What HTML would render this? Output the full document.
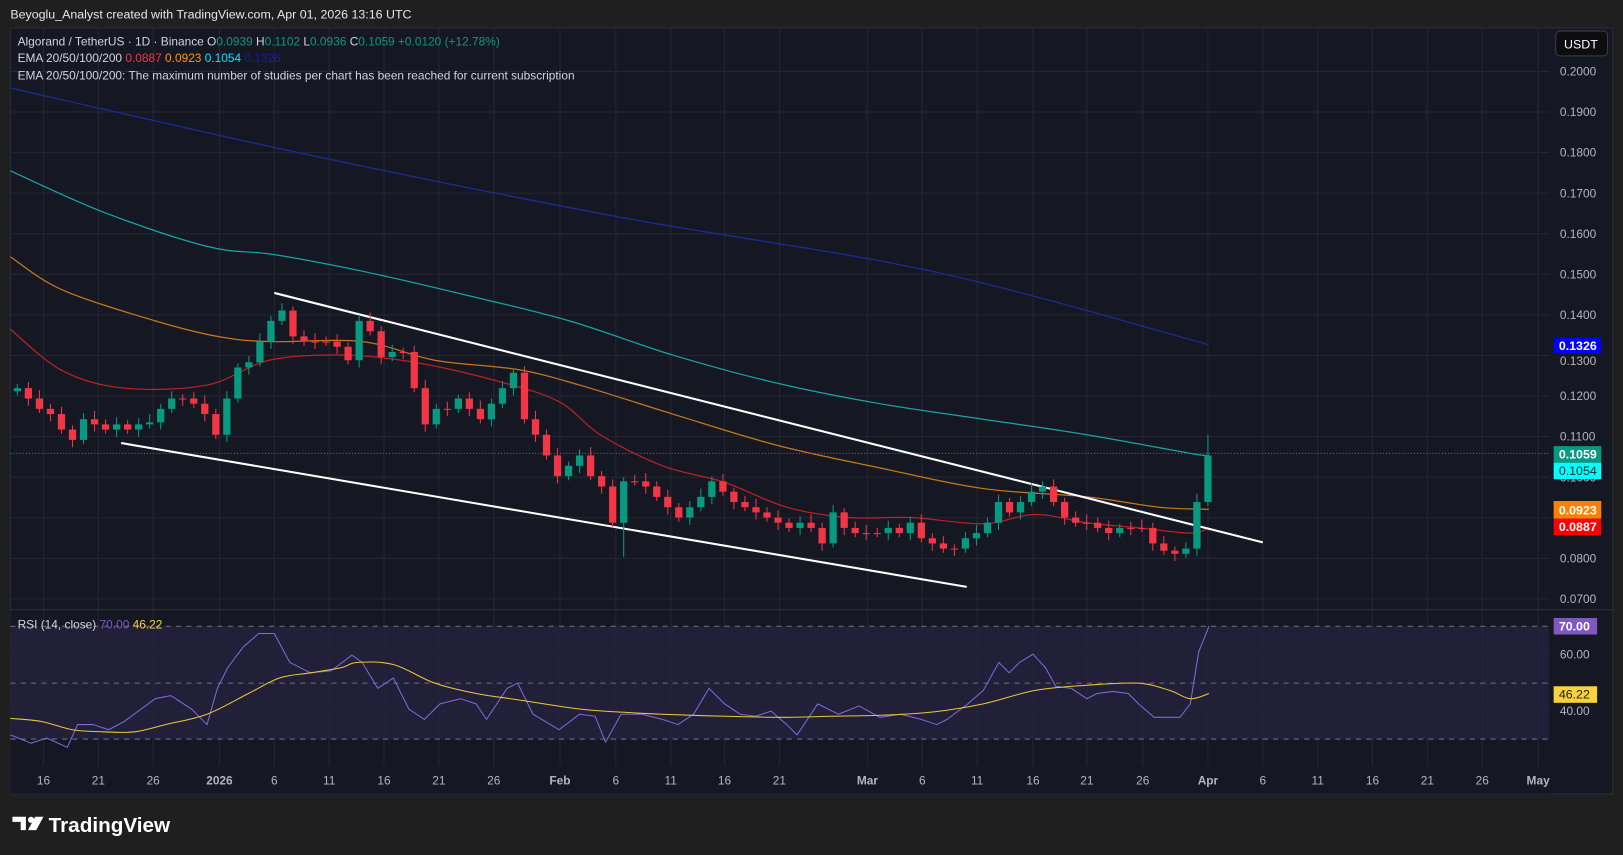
<!DOCTYPE html>
<html><head><meta charset="utf-8"><style>
html,body{margin:0;padding:0;background:#1f1f1f;width:1623px;height:855px;overflow:hidden}
svg{display:block}
text{font-family:"Liberation Sans",sans-serif}
</style></head><body>
<svg id="s" width="1623" height="855" viewBox="0 0 1568 826" xmlns="http://www.w3.org/2000/svg">
<rect width="1568" height="826" fill="#1f1f1f"/>
<text x="10" y="18" fill="#e6e6e6" font-size="12">Beyoglu_Analyst created with TradingView.com, Apr 01, 2026 13:16 UTC</text>
<rect x="10" y="27" width="1548" height="740" fill="#151823" stroke="#2a2e39"/>
<rect x="10" y="589" width="1487" height="178" fill="#151823"/>
<rect x="10" y="605" width="1487" height="109" fill="#221f38"/>
<g id="grid" stroke="#232734" stroke-width="1"></g>
<line x1="10" y1="589" x2="1558" y2="589" stroke="#2a2e39"/>
<g stroke="#6e6e80" stroke-dasharray="5,5" stroke-width="1">
<line x1="10" y1="605" x2="1497" y2="605"/><line x1="10" y1="660" x2="1497" y2="660"/><line x1="10" y1="714" x2="1497" y2="714"/></g>
<g id="g"></g>
<g font-size="11.5" fill="#b2b5be" id="ax"></g>
<rect x="1503" y="30" width="50" height="24" rx="4" fill="#0d0d0f" stroke="#3a3d45"/>
<text x="1511" y="47" fill="#fff" font-size="12">USDT</text>
<text x="17" y="44" font-size="11.5" fill="#d1d4dc">Algorand / TetherUS · 1D · Binance  O<tspan fill="#089981">0.0939</tspan>  H<tspan fill="#089981">0.1102</tspan>  L<tspan fill="#089981">0.0936</tspan>  C<tspan fill="#089981">0.1059  +0.0120 (+12.78%)</tspan></text>
<text x="17" y="60" font-size="11.5" fill="#d1d4dc">EMA 20/50/100/200  <tspan fill="#f23645">0.0887</tspan>  <tspan fill="#ff9800">0.0923</tspan>  <tspan fill="#00e5ff">0.1054</tspan>  <tspan fill="#1a1aa8">0.1326</tspan></text>
<text x="17" y="77" font-size="11.5" fill="#d1d4dc">EMA 20/50/100/200: The maximum number of studies per chart has been reached for current subscription</text>
<text x="17" y="607" font-size="11.5" fill="#d1d4dc">RSI (14, close)  <tspan fill="#7e57c2">70.00</tspan>  <tspan fill="#f7d23c">46.22</tspan></text>
<g font-size="12" font-weight="bold">
<rect x="1501" y="326" width="46" height="15" fill="#0000ff"/><text x="1506" y="338" fill="#fff">0.1326</text>
<rect x="1501" y="431" width="46" height="16" fill="#089981"/><text x="1506" y="443" fill="#fff">0.1059</text>
<rect x="1501" y="447" width="46" height="16" fill="#00ffff"/><text x="1506" y="459" fill="#0a2a2a" font-weight="normal">0.1054</text>
<rect x="1501" y="484" width="46" height="17" fill="#ff8000"/><text x="1506" y="497" fill="#fff">0.0923</text>
<rect x="1501" y="501" width="46" height="16" fill="#ff0000"/><text x="1506" y="513" fill="#fff">0.0887</text>
<rect x="1501" y="597" width="42" height="16" fill="#7e57c2"/><text x="1506" y="609" fill="#fff">70.00</text>
<rect x="1501" y="663" width="42" height="16" fill="#f7d23c"/><text x="1506" y="675" fill="#222" font-weight="normal">46.22</text>
</g>
<g transform="translate(12,789)"><path d="M0 0h13v13h-5v-8h-8z" fill="#fff"/><circle cx="18" cy="3" r="3" fill="#fff"/><path d="M22 0h8l-7 13h-8z" fill="#fff"/></g>
<text x="47" y="804" fill="#fff" font-size="20" font-weight="bold">TradingView</text>
</svg>
<script>
const NS="http://www.w3.org/2000/svg";
const g=document.getElementById('g'),grid=document.getElementById('grid'),ax=document.getElementById('ax');
function el(p,t,a){const e=document.createElementNS(NS,t);for(const k in a)e.setAttribute(k,a[k]);p.appendChild(e);return e}
const py=p=>69+(0.2-p)/0.01*39.2;
for(let i=0;i<14;i++){const p=0.2-i*0.01,y=py(p);el(grid,'line',{x1:10,x2:1497,y1:y,y2:y});
 if(!(Math.abs(p-0.13)<1e-9)){const t=el(ax,'text',{x:1507,y:y+4});t.textContent=p.toFixed(4);} else {const t=el(ax,'text',{x:1507,y:y+9});t.textContent='0.1300';}}
[['60.00',632],['40.00',687]].forEach(a=>{el(grid,'line',{x1:10,x2:1497,y1:a[1],y2:a[1]});const t=el(ax,'text',{x:1507,y:a[1]+4});t.textContent=a[0]});
const dates=[['16',42],['21',95],['26',148],['2026',212],['6',265],['11',318],['16',371],['21',424],['26',477],['Feb',541],['6',595],['11',648],['16',700],['21',753],['Mar',838],['6',891],['11',944],['16',998],['21',1050],['26',1104],['Apr',1167],['6',1220],['11',1273],['16',1326],['21',1379],['26',1432],['May',1486]];
dates.forEach(d=>{el(grid,'line',{x1:d[1],x2:d[1],y1:27,y2:740});const t=el(ax,'text',{x:d[1],y:758,'text-anchor':'middle','font-weight':(['2026','Feb','Mar','Apr','May'].includes(d[0]))?'bold':'normal'});t.textContent=d[0]});
function poly(pts,c,w){el(g,'polyline',{points:pts.map(p=>p.join(',')).join(' '),fill:'none',stroke:c,'stroke-width':w,'stroke-linejoin':'round'})}
function smooth(pts,c,w){let d='M'+pts[0][0]+','+pts[0][1];for(let i=0;i<pts.length-1;i++){const p0=pts[i-1]||pts[i],p1=pts[i],p2=pts[i+1],p3=pts[i+2]||p2;
 d+=' C'+(p1[0]+(p2[0]-p0[0])/6)+','+(p1[1]+(p2[1]-p0[1])/6)+' '+(p2[0]-(p3[0]-p1[0])/6)+','+(p2[1]-(p3[1]-p1[1])/6)+' '+p2[0]+','+p2[1];}
 el(g,'path',{d:d,fill:'none',stroke:c,'stroke-width':w})}
smooth([[10,85],[300,150],[600,210],[900,262],[1168,333]],'#1e2a9a',1.2);
smooth([[10,165],[100,205],[200,238],[265,246],[350,262],[450,285],[550,310],[650,343],[750,370],[850,390],[950,405],[1050,420],[1150,438],[1168,440]],'#1aa3a3',1.2);
smooth([[10,248],[60,280],[150,310],[210,325],[260,330],[350,330],[420,348],[500,357],[560,372],[650,400],[750,430],[850,452],[950,472],[1050,480],[1120,490],[1168,492]],'#c8761a',1.2);
smooth([[10,318],[60,358],[120,375],[200,372],[260,348],[330,343],[400,350],[480,368],[540,388],[580,420],[640,450],[700,466],[760,490],[820,500],[880,500],[950,506],[1000,497],[1050,505],[1100,510],[1150,515],[1168,510]],'#b82222',1.2);
el(g,'line',{x1:10,x2:1497,y1:438,y2:438,stroke:'#089981','stroke-dasharray':'1,2'});
el(g,'line',{x1:265,y1:283,x2:1220,y2:524,stroke:'#fff','stroke-width':2});
el(g,'line',{x1:117,y1:428,x2:934,y2:567,stroke:'#fff','stroke-width':2});
const c=[375,385,395,400,415,425,405,410,415,410,415,410,408,395,385,385,390,400,420,385,355,350,330,310,300,325,330,330,330,335,348,310,320,345,340,340,375,410,395,395,385,395,405,390,375,360,405,420,440,460,450,440,460,470,505,465,465,470,480,490,500,490,480,465,475,485,490,495,500,505,510,505,510,525,495,510,515,515,515,510,515,505,520,525,530,530,520,515,505,485,495,485,475,470,485,500,505,505,510,515,510,510,510,525,532,535,530,485,440];
const n=c.length,step=10.65,x0=1167-(n-1)*step;
for(let i=0;i<n;i++){const o=i?c[i-1]:c[0]+3,cl=c[i];const up=cl<o;const col=up?'#089981':'#f23645';const x=x0+i*step;
 const top=Math.min(o,cl),bot=Math.max(o,cl);const hi=top-4-((i*7)%5),lo=bot+4+((i*3)%6);
 el(g,'line',{x1:x,x2:x,y1:i==n-1?420:hi,y2:i==55?538:lo,stroke:col});el(g,'rect',{x:x-3.5,y:top,width:7,height:Math.max(1,bot-top),fill:col});}
poly([[10,710],[30,718],[45,713],[65,722],[75,700],[90,700],[105,705],[120,697],[150,675],[165,672],[185,685],[200,700],[210,665],[220,645],[235,625],[250,612],[265,612],[280,640],[300,650],[320,648],[340,633],[350,640],[365,665],[380,655],[395,685],[410,695],[425,680],[445,675],[460,680],[470,695],[490,665],[500,660],[515,690],[540,705],[560,690],[575,692],[585,717],[600,690],[620,690],[640,695],[655,700],[670,690],[685,665],[700,680],[715,690],[730,692],[745,687],[760,700],[770,710],[790,680],[810,690],[830,682],[850,693],[870,690],[890,695],[905,700],[915,695],[935,680],[950,667],[965,640],[975,650],[985,640],[998,632],[1010,645],[1020,663],[1035,665],[1050,675],[1060,670],[1075,668],[1090,670],[1100,680],[1115,693],[1140,693],[1150,680],[1158,630],[1168,605]],'#7e6ad8',1);
smooth([[10,694],[40,697],[70,705],[100,707],[130,707],[160,700],[200,690],[240,670],[270,655],[300,650],[330,645],[345,640],[380,642],[420,660],[460,670],[500,676],[560,685],[600,688],[640,690],[700,692],[760,693],[800,692],[850,691],[900,688],[950,680],[1000,667],[1050,662],[1100,660],[1130,667],[1150,675],[1168,670]],'#e8c83a',1);
</script>
</body></html>
